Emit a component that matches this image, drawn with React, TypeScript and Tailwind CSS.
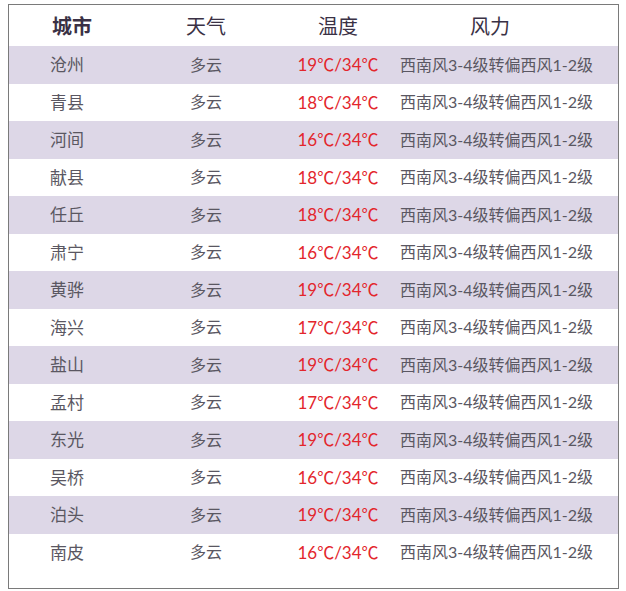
import React from "react";

const rows: [string, string, string][] = [
  ["沧州", "19", "34"],
  ["青县", "18", "34"],
  ["河间", "16", "34"],
  ["献县", "18", "34"],
  ["任丘", "18", "34"],
  ["肃宁", "16", "34"],
  ["黄骅", "19", "34"],
  ["海兴", "17", "34"],
  ["盐山", "19", "34"],
  ["孟村", "17", "34"],
  ["东光", "19", "34"],
  ["吴桥", "16", "34"],
  ["泊头", "19", "34"],
  ["南皮", "16", "34"],
];

const font = { fontFamily: 'Lato, "Noto Sans CJK SC", sans-serif' };

export default function App() {
  return (
    <div className="w-[626px] h-[591px] bg-white pt-[4px] pl-[8px]" style={font}>
      <div className="w-[611px] h-[585px] border border-[#7a7a7a] flex flex-col">
        <div className="flex h-[41px] items-center text-[20px] text-[#3a3145]">
          <div className="w-[126px] text-center font-bold">城市</div>
          <div className="w-[142px] text-center font-normal">天气</div>
          <div className="w-[122px] text-center font-normal">温度</div>
          <div className="flex-1 pl-[71px] font-normal">风力</div>
        </div>
        {rows.map(([city, lo, hi], i) => (
          <div
            key={city}
            className={`flex h-[37.5px] shrink-0 items-center text-[#5a5762] ${
              i % 2 === 0 ? "bg-[#ddd7e7]" : "bg-white"
            }`}
          >
            <div className="w-[126px] pl-[41px] text-[17px]">{city}</div>
            <div className="w-[142px] text-center text-[16px]">多云</div>
            <div className="w-[122px] text-center text-[17px] text-[#e3262c]">
              {lo}℃/{hi}℃
            </div>
            <div className="flex-1 pl-[1px] text-[16px]">西南风3-4级转偏西风1-2级</div>
          </div>
        ))}
        <div className="flex-1 bg-white" />
      </div>
    </div>
  );
}
